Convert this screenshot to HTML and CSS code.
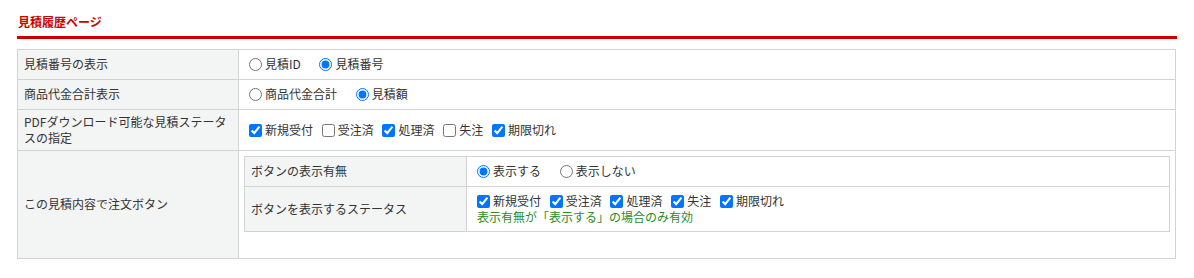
FILE: index.html
```html
<!DOCTYPE html>
<html lang="ja">
<head>
  <meta charset="UTF-8">
  <title>見積履歴ページ</title>
  <link rel="stylesheet" href="styles.css">
</head>
<body>
  <div class="page">
    <h2 class="section-title">見積履歴ページ</h2>

    <table class="setting">
      <tr>
        <th>見積番号の表示</th>
        <td>
          <label class="opt"><input type="radio" name="no_type">見積ID</label>
          <label class="opt"><input type="radio" name="no_type" checked>見積番号</label>
        </td>
      </tr>
      <tr>
        <th>商品代金合計表示</th>
        <td>
          <label class="opt"><input type="radio" name="total_type">商品代金合計</label>
          <label class="opt"><input type="radio" name="total_type" checked>見積額</label>
        </td>
      </tr>
      <tr class="tall">
        <th>PDFダウンロード可能な見積ステータスの指定</th>
        <td>
          <label class="chk"><input type="checkbox" checked>新規受付</label>
          <label class="chk"><input type="checkbox">受注済</label>
          <label class="chk"><input type="checkbox" checked>処理済</label>
          <label class="chk"><input type="checkbox">失注</label>
          <label class="chk"><input type="checkbox" checked>期限切れ</label>
        </td>
      </tr>
      <tr>
        <th>この見積内容で注文ボタン</th>
        <td class="nest-cell">
          <table class="setting inner">
            <tr>
              <th>ボタンの表示有無</th>
              <td>
                <label class="opt"><input type="radio" name="btn_show" checked>表示する</label>
                <label class="opt"><input type="radio" name="btn_show">表示しない</label>
              </td>
            </tr>
            <tr class="tall">
              <th>ボタンを表示するステータス</th>
              <td>
                <label class="chk"><input type="checkbox" checked>新規受付</label>
                <label class="chk"><input type="checkbox" checked>受注済</label>
                <label class="chk"><input type="checkbox" checked>処理済</label>
                <label class="chk"><input type="checkbox" checked>失注</label>
                <label class="chk"><input type="checkbox" checked>期限切れ</label>
                <div class="note">表示有無が「表示する」の場合のみ有効</div>
              </td>
            </tr>
          </table>
        </td>
      </tr>
    </table>
  </div>
</body>
</html>
```

FILE: styles.css
```css
body { margin: 0; background: #fff; font-family: "Noto Sans CJK JP", "Noto Sans", sans-serif; font-size: 12px; line-height: 16px; color: #333; }
.page { padding: 14px 17px 0 17px; }
.section-title { margin: 0 0 10px 0; padding: 0 0 6px 1px; font-size: 12px; line-height: 16px; font-weight: bold; color: #cc0000; border-bottom: 3px solid #cc0000; width: 1159px; }
.setting { border-collapse: collapse; width: 1159px; border: 1px solid #d3d3d3; }
.setting th, .setting td { border: 1px solid #d3d3d3; padding: 6px 6px 7px 6px; text-align: left; vertical-align: middle; font-weight: normal; }
.setting th { width: 208px; background: #f3f4f4; }
.setting td { padding-left: 10px; }
.setting .tall th, .setting .tall td { padding-top: 4px; padding-bottom: 4px; }
.setting td.nest-cell { padding: 5px 5px 26px 5px; vertical-align: top; }
.setting.inner { width: 100%; }
.setting.inner th { width: 209px; }
.setting.inner .tall td { padding-top: 6px; padding-bottom: 6px; }
.opt, .chk { display: inline-flex; align-items: center; vertical-align: top; }
.opt { margin-right: 16px; }
.chk { margin-right: 6px; }
.opt input, .chk input { width: 13px; height: 13px; margin: 0 3px 0 0; }
.note { color: #2b8a1e; }
```
